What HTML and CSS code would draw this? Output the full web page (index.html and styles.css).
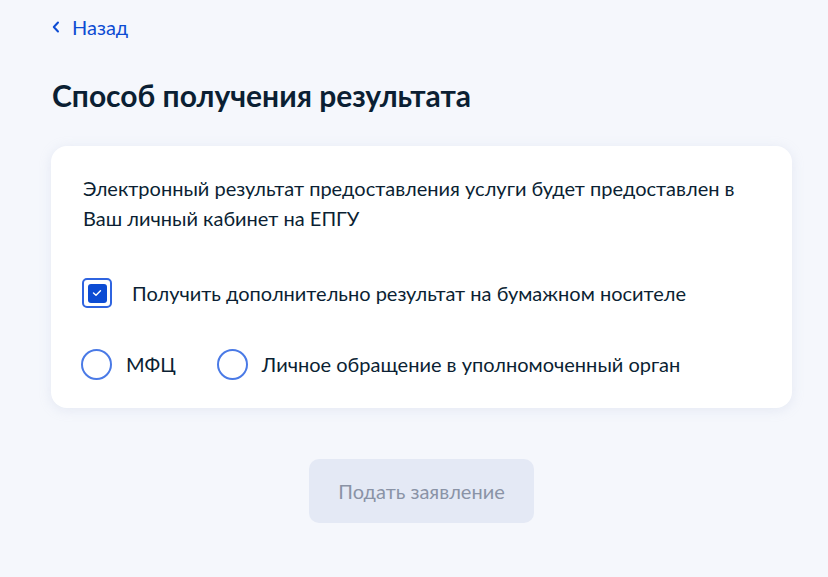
FILE: index.html
```html
<!DOCTYPE html>
<html lang="ru">
<head>
    <meta charset="UTF-8">
    <meta name="viewport" content="width=device-width, initial-scale=1.0">
    <title>Способ получения результата</title>
    <link rel="stylesheet" href="styles.css">
</head>
<body>
    <div class="page">
        <a class="back" href="#">
            <svg width="8" height="12" viewBox="0 0 8 12"><path d="M6 1.5 1.8 6 6 10.5" fill="none" stroke="#0d4cd3" stroke-width="2" stroke-linecap="round" stroke-linejoin="round"/></svg>
            <span>Назад</span>
        </a>

        <h1>Способ получения результата</h1>

        <div class="card">
            <p class="note">Электронный результат предоставления услуги будет предоставлен в Ваш личный кабинет на ЕПГУ</p>

            <label class="check">
                <span class="check-box">
                    <span class="check-fill">
                        <svg width="10" height="8" viewBox="0 0 10 8"><path d="M1.5 4 4 6.3 8.5 1.7" fill="none" stroke="#fff" stroke-width="1.4" stroke-linecap="round" stroke-linejoin="round"/></svg>
                    </span>
                </span>
                <span>Получить дополнительно результат на бумажном носителе</span>
            </label>

            <div class="radios">
                <label class="radio"><span class="radio-dot"></span><span>МФЦ</span></label>
                <label class="radio"><span class="radio-dot"></span><span>Личное обращение в уполномоченный орган</span></label>
            </div>
        </div>

        <div class="actions">
            <button type="button" disabled>Подать заявление</button>
        </div>
    </div>
</body>
</html>
```

FILE: styles.css
```css
body {
    font-family: Lato, "Noto Sans", sans-serif;
    margin: 0;
    background-color: #f5f7fc;
    color: #0b1f33;
}
.page {
    padding: 14px 36px 0 51px;
}
.back {
    display: flex;
    align-items: center;
    gap: 12px;
    color: #0d4cd3;
    text-decoration: none;
    font-size: 20px;
    height: 26px;
    padding-left: 1px;
}
h1 {
    font-size: 30px;
    font-weight: 700;
    margin: 37px 0 0 1px;
    line-height: 36px;
}
.card {
    margin-top: 33px;
    background: white;
    border-radius: 16px;
    box-shadow: 0 2px 12px rgba(180,190,220,0.25);
    padding: 27px 40px 28px 31px;
}
.note {
    margin: 0;
    padding-left: 1px;
    font-size: 20px;
    line-height: 30px;
}
.check {
    display: flex;
    align-items: center;
    gap: 20px;
    margin-top: 45px;
    font-size: 20px;
    line-height: 30px;
}
.check-box {
    width: 26px;
    height: 26px;
    border: 2px solid #2f64e0;
    border-radius: 5px;
    display: flex;
    align-items: center;
    justify-content: center;
}
.check-fill {
    width: 19px;
    height: 19px;
    background: #0d4cd3;
    border-radius: 3px;
    display: flex;
    align-items: center;
    justify-content: center;
}
.radios {
    display: flex;
    gap: 41px;
    margin-top: 41px;
    margin-left: -1px;
    font-size: 20px;
    line-height: 31px;
}
.radio {
    display: flex;
    align-items: center;
    gap: 14px;
}
.radio-dot {
    width: 27px;
    height: 27px;
    border: 2px solid #4a7ae6;
    border-radius: 50%;
}
.actions {
    display: flex;
    justify-content: center;
    margin-top: 51px;
}
button {
    width: 225px;
    height: 64px;
    border: none;
    border-radius: 10px;
    background-color: #e4e9f5;
    color: #8a93a6;
    font-family: Lato, "Noto Sans", sans-serif;
    font-size: 20px;
}
```
